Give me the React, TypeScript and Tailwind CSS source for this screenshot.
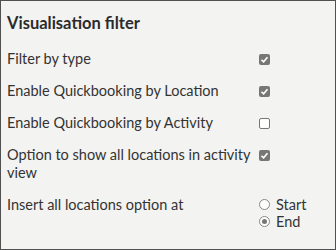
import React from "react";

function Check({ checked }: { checked: boolean }) {
  return checked ? (
    <div className="w-[11px] h-[11px] rounded-[2px] bg-[#777777] flex items-center justify-center">
      <svg width="9" height="9" viewBox="0 0 9 9">
        <path d="M1.5 4.8 L3.6 6.8 L7.5 2.2" stroke="white" strokeWidth="1.6" fill="none" />
      </svg>
    </div>
  ) : (
    <div className="w-[11px] h-[11px] rounded-[2px] bg-white border border-[#777777]" />
  );
}

function Radio({ checked }: { checked: boolean }) {
  return (
    <div className="w-[11px] h-[11px] rounded-full bg-white border border-[#888888] flex items-center justify-center">
      {checked && <div className="w-[5px] h-[5px] rounded-full bg-[#777777]" />}
    </div>
  );
}

function Row({ label, checked }: { label: string; checked: boolean }) {
  return (
    <div className="flex">
      <div className="w-[252px] leading-[18px]">{label}</div>
      <div className="h-[18px] flex items-center">
        <Check checked={checked} />
      </div>
    </div>
  );
}

export default function App() {
  return (
    <div
      className="w-[336px] h-[250px] bg-[#f3f3f2] border border-[#505050] text-[#333333] text-[14.5px] px-[6px]"
      style={{ fontFamily: "Lato, sans-serif" }}
    >
      <div className="pt-[10px] text-[16.5px] font-bold leading-[24px] text-[#2b2b2b]">Visualisation filter</div>
      <div className="mt-[15px] flex flex-col gap-[14px]">
        <Row label="Filter by type" checked />
        <Row label="Enable Quickbooking by Location" checked />
        <Row label="Enable Quickbooking by Activity" checked={false} />
        <Row label="Option to show all locations in activity view" checked />
        <div className="flex">
          <div className="w-[252px] leading-[18px]">Insert all locations option at</div>
          <div className="flex flex-col">
            <div className="flex items-center gap-[6px] h-[17px]">
              <Radio checked={false} />
              <span>Start</span>
            </div>
            <div className="flex items-center gap-[6px] h-[17px]">
              <Radio checked />
              <span>End</span>
            </div>
          </div>
        </div>
      </div>
    </div>
  );
}
